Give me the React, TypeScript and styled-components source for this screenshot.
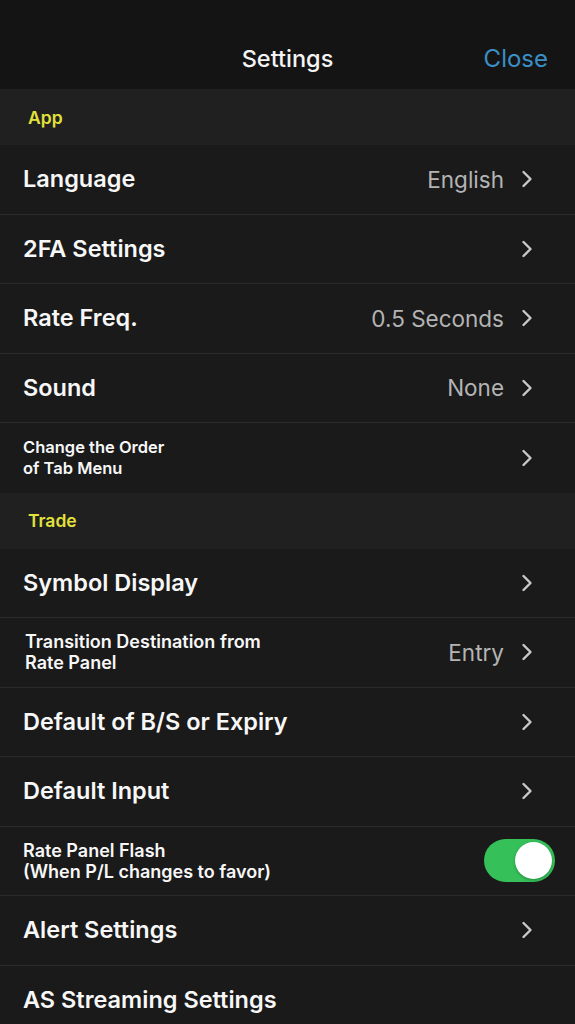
import React from "react";
import styled, { createGlobalStyle } from "styled-components";

const Global = createGlobalStyle`
  html, body { margin: 0; padding: 0; background: #1a1a1a; }
  body { font-family: Inter, "Noto Sans", sans-serif; -webkit-font-smoothing: antialiased; }
`;

const Page = styled.div`
  width: 575px;
  height: 1024px;
  overflow: hidden;
  background: #1a1a1a;
  display: flex;
  flex-direction: column;
`;

const Header = styled.header`
  height: 89px;
  flex: none;
  background: #141414;
  display: grid;
  grid-template-columns: 1fr auto 1fr;
  align-items: center;
  padding: 0 27px 0 27px;
  box-sizing: border-box;
`;

const Title = styled.h1`
  grid-column: 2;
  margin: 0;
  padding-top: 28px;
  color: #f4f4f4;
  font-size: 23.5px;
  font-weight: 500;
`;

const CloseBtn = styled.button`
  grid-column: 3;
  justify-self: end;
  background: none;
  border: none;
  padding: 28px 0 0 0;
  color: #3b8fc4;
  font-family: inherit;
  font-size: 24px;
  font-weight: 400;
`;

const Section = styled.div`
  height: 56px;
  flex: none;
  background: #202020;
  display: flex;
  align-items: center;
  padding-left: 28px;
  color: #e3e23c;
  font-size: 17.5px;
  font-weight: 600;
  box-sizing: border-box;
`;

const Row = styled.div<{ $last?: boolean }>`
  height: 69.5px;
  flex: none;
  box-sizing: border-box;
  display: flex;
  align-items: center;
  padding: 0 20px 0 23px;
  border-bottom: ${(p) => (p.$last ? "none" : "1px solid #2b2b2b")};
  background: #1a1a1a;
`;

const Label = styled.div<{ $size: number; $indent?: boolean }>`
  flex: 1;
  color: #f7f7f7;
  font-size: ${(p) => p.$size}px;
  font-weight: 600;
  line-height: ${(p) => (p.$size < 20 ? "21px" : "26px")};
  padding-left: ${(p) => (p.$indent ? "2px" : "0")};
`;

const Value = styled.span`
  color: #b4b4b4;
  font-size: 22.5px;
  font-weight: 400;
  margin-right: 17px;
`;

const Chevron = styled.svg`
  width: 12px;
  height: 18px;
  margin-right: 22px;
  flex: none;
`;

const Toggle = styled.div`
  width: 71px;
  height: 43px;
  border-radius: 22px;
  background: #35c05a;
  position: relative;
  flex: none;
`;

const Knob = styled.div`
  position: absolute;
  top: 3px;
  right: 3px;
  width: 37px;
  height: 37px;
  border-radius: 50%;
  background: #ffffff;
  box-shadow: 0 1px 3px rgba(0, 0, 0, 0.3);
`;

const Arrow = () => (
  <Chevron viewBox="0 0 12 18">
    <path d="M2.5 2 L9.5 9 L2.5 16" fill="none" stroke="#c9c9c9" strokeWidth="2.4" strokeLinecap="round" strokeLinejoin="round" />
  </Chevron>
);

type Item = { label: React.ReactNode; value?: string; size?: number; indent?: boolean; toggle?: boolean; noArrow?: boolean };

const appItems: Item[] = [
  { label: "Language", value: "English" },
  { label: "2FA Settings" },
  { label: "Rate Freq.", value: "0.5 Seconds" },
  { label: "Sound", value: "None" },
  { label: <>Change the Order<br />of Tab Menu</>, size: 16.5 },
];

const tradeItems: Item[] = [
  { label: "Symbol Display" },
  { label: <>Transition Destination from<br />Rate Panel</>, value: "Entry", size: 18, indent: true },
  { label: "Default of B/S or Expiry" },
  { label: "Default Input" },
  { label: <>Rate Panel Flash<br />(When P/L changes to favor)</>, size: 18, toggle: true },
  { label: "Alert Settings" },
  { label: "AS Streaming Settings", noArrow: true },
];

const renderRow = (it: Item, i: number, arr: Item[]) => (
  <Row key={i} $last={i === arr.length - 1}>
    <Label $size={it.size ?? 23.5} $indent={it.indent}>{it.label}</Label>
    {it.value && <Value>{it.value}</Value>}
    {it.toggle ? (
      <Toggle><Knob /></Toggle>
    ) : it.noArrow ? null : (
      <Arrow />
    )}
  </Row>
);

export default function App() {
  return (
    <Page>
      <Global />
      <Header>
        <Title>Settings</Title>
        <CloseBtn>Close</CloseBtn>
      </Header>
      <Section>App</Section>
      {appItems.map(renderRow)}
      <Section>Trade</Section>
      {tradeItems.map(renderRow)}
    </Page>
  );
}
